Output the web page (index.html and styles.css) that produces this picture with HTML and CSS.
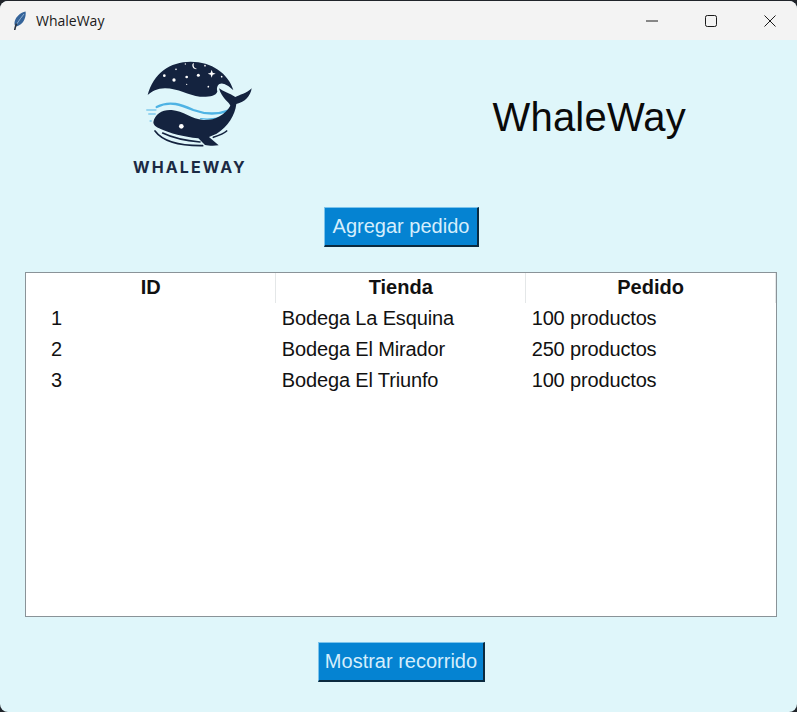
FILE: index.html
```html
<!doctype html>
<html lang="es">
  <head>
    <meta charset="utf-8" />
    <title>WhaleWay</title>
    <link rel="stylesheet" href="styles.css">
  </head>

  <body>
    <div class="window">
      <div class="titlebar">
        <svg class="app-icon" width="14" height="20" viewBox="0 0 14 20">
          <path d="M12.6 .4C7.500 1.500 3 5.500 1.800 10 1.200 12.300 1.500 14.300 2.500 15.500 6.500 15 9.800 12.300 11.300 8.800 12.500 6 13 3.200 12.600 .4Z" fill="#35649a"/>
          <path d="M11 3C8.500 6 6 9.500 3.700 13" stroke="#8fb0d2" stroke-width="1" fill="none"/>
          <path d="M3.500 12.500C2.800 14.500 2 16.800 1.700 19" stroke="#2b3440" stroke-width="1.600" fill="none"/>
        </svg>
        <span class="app-name">WhaleWay</span>
        <div class="controls">
          <svg width="12" height="12" viewBox="0 0 12 12"><path d="M0 6H12" stroke="#1a1a1a" stroke-width="1"/></svg>
          <svg width="12" height="12" viewBox="0 0 12 12"><rect x=".5" y=".5" width="11" height="11" rx="1.800" fill="none" stroke="#1a1a1a"/></svg>
          <svg width="12" height="12" viewBox="0 0 12 12"><path d="M.5 .5L11.500 11.500M11.500 .5L.5 11.500" stroke="#1a1a1a" stroke-width="1"/></svg>
        </div>
      </div>

      <main class="content">
        <header class="top">
          <div class="logo">
            <svg width="124" height="97" viewBox="30 45 372 291">
              <!-- night sky -->
              <path d="M83 150C100 85 150 50 212 50 275 50 325 85 340 135 331 128 322 118 308 116 296 114 288 124 292 140 287 153 268 156 240 155 205 152 175 130 135 130 112 130 95 140 83 150Z" fill="#14233f"/>
              <g fill="#fff">
                <circle cx="133" cy="92" r="4"/>
                <circle cx="162" cy="105" r="5"/>
                <circle cx="200" cy="96" r="4"/>
                <circle cx="235" cy="91" r="4.500"/>
                <circle cx="168" cy="73" r="2.500"/>
                <circle cx="196" cy="57" r="2"/>
                <circle cx="255" cy="62" r="2.500"/>
                <circle cx="305" cy="95" r="2.500"/>
                <circle cx="200" cy="118" r="2"/>
                <circle cx="265" cy="125" r="2.500"/>
                <path d="M275 74L278 83 287 86 278 89 275 98 272 89 263 86 272 83Z"/>
                <path d="M222 55C219 62 222 70 231 72 224 74 216 68 217 60 217 57 219 55 222 55Z"/>
              </g>
              <!-- waves -->
              <g fill="none" stroke="#4fb3e4" stroke-linecap="round">
                <path d="M110 186C150 165 185 180 220 195 255 208 295 208 328 196" stroke-width="7"/>
                <path d="M242 221C265 224 290 221 312 216" stroke-width="4"/>
                <path d="M80 195H108M86 207H106M90 228H94" stroke-width="3"/>
              </g>
              <!-- whale -->
              <path d="M100 232C104 207 128 193 155 195 190 198 215 222 250 225 285 226 315 210 331 182 326 170 305 160 297 130 310 140 330 145 346 156 358 150 380 145 395 130 392 152 375 172 349 177 345 210 325 245 290 266L267 276 296 301C280 303 265 302 255 300L235 280C190 275 150 265 122 252 110 247 101 242 100 232Z" fill="#14233f"/>
              <circle cx="184" cy="244" r="7" fill="#fff"/>
              <g fill="none" stroke="#14233f" stroke-linecap="round">
                <path d="M105 258C125 285 170 303 248 302" stroke-width="5"/>
                <path d="M128 264C155 277 195 287 240 291" stroke-width="5"/>
                <path d="M280 277C295 272 310 267 320 258" stroke-width="5"/>
              </g>
            </svg>
            <span class="logo-name">WHALEWAY</span>
          </div>
          <h1 class="title">WhaleWay</h1>
        </header>

        <button class="action add" type="button">Agregar pedido</button>

        <div class="table-box">
          <table class="orders">
            <thead>
              <tr>
                <th>ID</th>
                <th>Tienda</th>
                <th>Pedido</th>
              </tr>
            </thead>
            <tbody>
              <tr>
                <td class="id">1</td>
                <td>Bodega La Esquina</td>
                <td>100 productos</td>
              </tr>
              <tr>
                <td class="id">2</td>
                <td>Bodega El Mirador</td>
                <td>250 productos</td>
              </tr>
              <tr>
                <td class="id">3</td>
                <td>Bodega El Triunfo</td>
                <td>100 productos</td>
              </tr>
            </tbody>
          </table>
        </div>

        <button class="action route" type="button">Mostrar recorrido</button>
      </main>
    </div>
  </body>
</html>
```

FILE: styles.css
```css
html,
body {
  margin: 0;
  height: 712px;
  overflow: hidden;
  background-color: #20242a;
}

body {
  font-family: "Liberation Sans", Arial, sans-serif;
  color: #111;
}

.window {
  height: 711px;
  margin-top: 1px;
  display: flex;
  flex-direction: column;
  border-radius: 8px;
  overflow: hidden;
  background-color: #dff6fa;
}

.titlebar {
  height: 39px;
  flex: none;
  display: flex;
  align-items: center;
  padding-left: 13px;
  background-color: #f3f3f3;
  font-family: "Open Sans", sans-serif;
  font-size: 14px;
  color: #1a1a1a;
}

.app-icon {
  margin-right: 9px;
}

.controls {
  margin-left: auto;
  display: flex;
  align-items: center;
  gap: 47px;
  padding-right: 21px;
}

.content {
  flex: 1;
  display: flex;
  flex-direction: column;
  align-items: center;
  padding: 0 20px 0 25px;
}

.top {
  align-self: stretch;
  height: 167px;
  display: flex;
  align-items: flex-start;
  justify-content: space-between;
  margin-left: -25px;
  padding: 0 91px 0 130px;
}

.logo {
  display: flex;
  flex-direction: column;
  align-items: flex-start;
  margin-top: 20px;
}

.logo-name {
  font-family: Inter, sans-serif;
  font-size: 16px;
  font-weight: 700;
  letter-spacing: 2.100px;
  color: #1b2a44;
  line-height: 18px;
  margin: 1px 0 0 3px;
}

.title {
  margin: 55px 0 0;
  font-size: 40px;
  font-weight: 400;
  letter-spacing: 0.2px;
  color: #0a0a0a;
}

.action {
  height: 40px;
  padding: 0;
  margin-left: 1px;
  border: 1px solid #7cc4ec;
  border-right: 2px solid #0b2a3f;
  border-bottom: 2px solid #0b2a3f;
  background-color: #0583d2;
  color: #d5eefc;
  font-family: "Liberation Sans", Arial, sans-serif;
  font-size: 20px;
}

.add {
  width: 155px;
}

.route {
  width: 167px;
}

.table-box {
  align-self: stretch;
  height: 343px;
  margin: 25px 0;
  border: 1px solid #8a9398;
  background-color: #fff;
}

.orders {
  width: 750px;
  table-layout: fixed;
  border-collapse: collapse;
  font-size: 20px;
}

.orders th {
  height: 28px;
  padding: 0 0 2px;
  font-weight: 700;
  border-right: 1px solid #e4e7e8;
}

.orders td {
  height: 31px;
  padding: 0 0 0 6px;
  letter-spacing: -0.15px;
}

.orders td.id {
  padding-left: 25px;
}
```
